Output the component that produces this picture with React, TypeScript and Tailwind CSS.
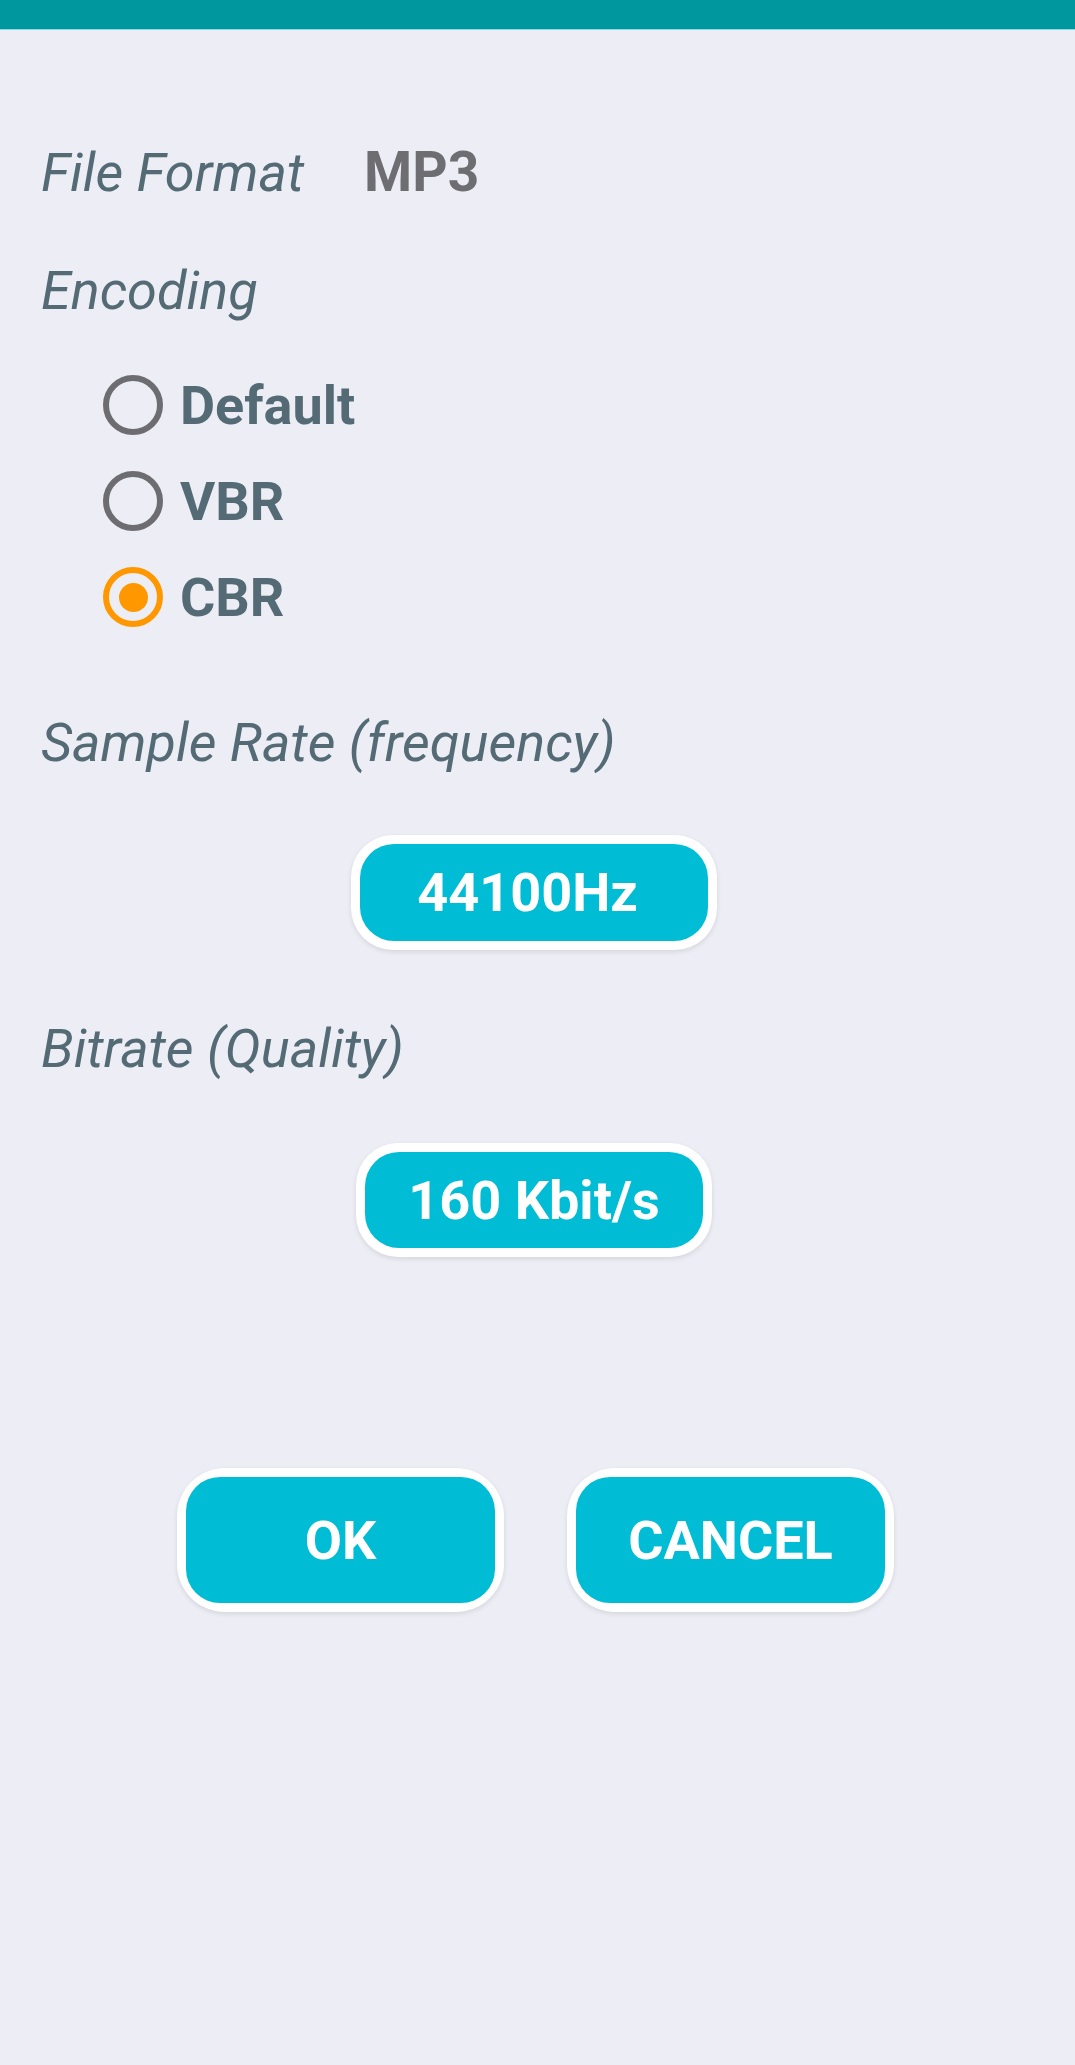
import React from 'react';

const font = { fontFamily: 'Roboto, "Noto Sans", sans-serif' };

const RadioRow = ({ label, checked }: { label: string; checked?: boolean }) => (
  <div className="flex h-[96px] items-center">
    <div
      className={
        checked
          ? 'flex h-[60px] w-[60px] items-center justify-center rounded-full border-[6px] border-[#ff9800]'
          : 'flex h-[60px] w-[60px] items-center justify-center rounded-full border-[6px] border-[#6c6c71]'
      }
    >
      {checked && <div className="h-[29px] w-[29px] rounded-full bg-[#ff9800]"></div>}
    </div>
    <span className="ml-[17px] text-[54px] font-bold leading-[63px] text-[#546b75]">{label}</span>
  </div>
);

const PillButton = ({ label, className, innerClass = '' }: { label: string; className: string; innerClass?: string }) => (
  <div className={`rounded-[42px] bg-white p-[9px] shadow-[0_2px_5px_rgba(0,0,0,0.10)] ${className}`}>
    <div className={`flex h-full w-full items-center justify-center rounded-[34px] bg-[#00bcd4] ${innerClass}`}>
      <span className="text-[54px] font-bold leading-[63px] text-white">{label}</span>
    </div>
  </div>
);

export default function App() {
  return (
    <div className="min-h-[2065px] w-full bg-[#edeef5]" style={font}>
      <div className="h-[30px] w-full border-b border-[#8fd8e2] bg-[#00979f]"></div>

      <div className="pl-[41px] pt-[111px]">
        <div className="flex items-baseline">
          <span className="text-[54px] italic leading-[63px] text-[#546b75]">File Format</span>
          <span className="ml-[60px] text-[55px] font-bold leading-[63px] text-[#6d6d72]">MP3</span>
        </div>

        <div className="mt-[55px] text-[54px] italic leading-[63px] text-[#546b75]">Encoding</div>

        <div className="mt-[35px] pl-[62px]">
          <RadioRow label="Default" />
          <RadioRow label="VBR" />
          <RadioRow label="CBR" checked />
        </div>

        <div className="mt-[66px] text-[54px] italic leading-[63px] text-[#546b75]">Sample Rate (frequency)</div>
      </div>

      <div className="mt-[61px] flex justify-center pr-[7px]">
        <PillButton label="44100Hz" className="h-[115px] w-[366px]" innerClass="pr-[13px]" />
      </div>

      <div className="mt-[67px] pl-[41px] text-[54px] italic leading-[63px] text-[#546b75]">Bitrate (Quality)</div>

      <div className="mt-[63px] flex justify-center pr-[7px]">
        <PillButton label="160 Kbit/s" className="h-[114px] w-[356px]" />
      </div>

      <div className="mt-[211px] flex justify-center gap-[63px] pr-[4px]">
        <PillButton label="OK" className="h-[144px] w-[327px] rounded-[48px]" />
        <PillButton label="CANCEL" className="h-[144px] w-[327px] rounded-[48px]" />
      </div>
    </div>
  );
}
